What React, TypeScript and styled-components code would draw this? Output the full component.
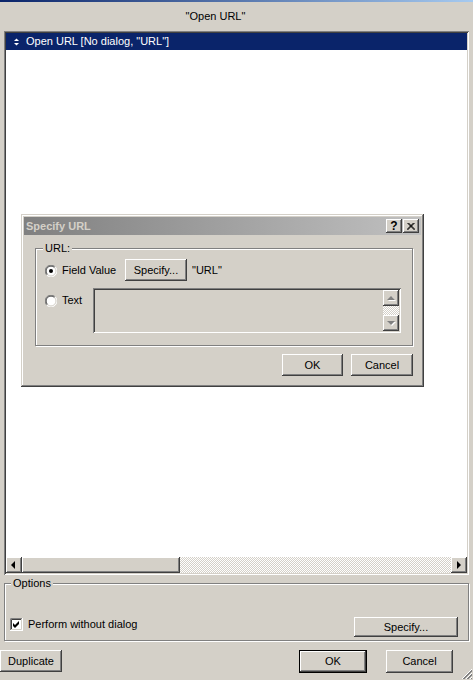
import React from 'react';
import styled, { createGlobalStyle, css } from 'styled-components';

const face = '#d4d0c8';
const shade = '#808080';
const dark = '#404040';
const navy = '#0a246a';

const GlobalStyle = createGlobalStyle`
  *, *::before, *::after { box-sizing: border-box; }
  html, body { margin: 0; padding: 0; background: ${face}; }
  body {
    font-family: 'Liberation Sans', Arial, sans-serif;
    font-size: 11px;
    line-height: 13px;
    color: #000;
  }
`;

const raised = css`
  box-shadow: inset -1px -1px ${dark}, inset 1px 1px #fff, inset -2px -2px ${shade}, inset 2px 2px ${face};
`;

const sunken = css`
  box-shadow: inset 1px 1px ${shade}, inset -1px -1px #fff, inset 2px 2px ${dark}, inset -2px -2px ${face};
`;

const checker = css`
  background: repeating-conic-gradient(#fff 0 25%, ${face} 0 50%) 0 0 / 2px 2px;
`;

const Window = styled.div`
  position: relative;
  width: 473px;
  height: 680px;
  display: flex;
  flex-direction: column;
  background: ${face};
  overflow: hidden;
`;

const TitleEdge = styled.div`
  height: 2px;
  background: linear-gradient(to right, ${navy}, #a6caf0);
`;

const Heading = styled.div`
  height: 29px;
  display: flex;
  align-items: center;
  justify-content: center;
  padding-right: 42px;
`;

const ListBox = styled.div`
  margin: 0 4px;
  height: 544px;
  padding: 2px;
  background: #fff;
  ${sunken};
  display: flex;
  flex-direction: column;
`;

const ListRow = styled.div<{ $selected?: boolean }>`
  height: 17px;
  display: flex;
  align-items: center;
  gap: 7px;
  padding-left: 8px;
  white-space: nowrap;
  background: ${(p) => (p.$selected ? navy : '#fff')};
  color: ${(p) => (p.$selected ? '#fff' : '#000')};
`;

const ListFill = styled.div`
  flex: 1;
`;

const ScrollBar = styled.div<{ $vertical?: boolean }>`
  display: flex;
  flex-direction: ${(p) => (p.$vertical ? 'column' : 'row')};
  ${(p) => (p.$vertical ? 'width: 16px;' : 'height: 16px;')}
`;

const ScrollBtn = styled.div`
  width: 16px;
  height: 16px;
  flex: none;
  display: flex;
  align-items: center;
  justify-content: center;
  background: ${face};
  ${raised};
`;

const Thumb = styled.div<{ $size: number }>`
  width: ${(p) => p.$size}px;
  flex: none;
  background: ${face};
  ${raised};
`;

const Track = styled.div`
  flex: 1;
  ${checker};
`;

const GroupBox = styled.fieldset`
  margin: 0;
  min-width: 0;
  border: 1px solid ${shade};
  box-shadow: inset 1px 1px #fff, 1px 1px #fff;
`;

const Legend = styled.legend<{ $shift: number }>`
  padding: 0 2px;
  margin-left: ${(p) => p.$shift}px;
  line-height: 13px;
  background: ${face};
`;

const OptionsBox = styled(GroupBox)`
  margin: 2px 4px 0;
  padding: 0 10px 3px 5px;
`;

const OptionsRow = styled.div`
  display: flex;
  align-items: flex-start;
  justify-content: space-between;
  margin-top: 27px;
`;

const CheckLabel = styled.label`
  display: flex;
  align-items: center;
  gap: 5px;
  margin-top: 1px;
  white-space: nowrap;
`;

const Button = styled.button<{ $w: number; $h: number; $default?: boolean }>`
  width: ${(p) => p.$w}px;
  height: ${(p) => p.$h}px;
  flex: none;
  padding: 0;
  font: inherit;
  color: #000;
  background: ${face};
  border: ${(p) => (p.$default ? '1px solid #000' : 'none')};
  ${raised};
`;

const BottomBar = styled.div`
  display: flex;
  align-items: flex-start;
  gap: 19px;
  margin-top: 9px;
  padding-right: 20px;
`;

const Spacer = styled.div`
  flex: 1;
`;

const Grip = styled.svg`
  position: absolute;
  right: 0;
  bottom: 0;
`;

const Dialog = styled.div`
  position: absolute;
  left: 21px;
  top: 214px;
  width: 403px;
  height: 173px;
  padding: 3px;
  background: ${face};
  box-shadow: inset -1px -1px ${dark}, inset 1px 1px ${face}, inset -2px -2px ${shade}, inset 2px 2px #fff;
  display: flex;
  flex-direction: column;
`;

const DialogBar = styled.div`
  height: 18px;
  display: flex;
  align-items: center;
  padding: 0 2px;
  background: linear-gradient(to right, ${shade}, #c0c0c0);
`;

const DialogTitle = styled.div`
  flex: 1;
  font-weight: bold;
  color: ${face};
`;

const CaptionBtn = styled.div<{ $gap?: number }>`
  width: 16px;
  height: 14px;
  margin-left: ${(p) => p.$gap ?? 0}px;
  display: flex;
  align-items: center;
  justify-content: center;
  font-weight: bold;
  font-size: 12px;
  background: ${face};
  ${raised};
`;

const UrlBox = styled(GroupBox)`
  margin: 7px 8px 0 11px;
  padding: 4px 11px 12px 9px;
`;

const OptionRow = styled.div<{ $top?: number }>`
  display: flex;
  align-items: flex-start;
  margin-top: ${(p) => p.$top ?? 0}px;
`;

const RadioLabel = styled.label<{ $top: number; $w: number }>`
  display: flex;
  align-items: center;
  gap: 5px;
  flex: none;
  white-space: nowrap;
  width: ${(p) => p.$w}px;
  margin-top: ${(p) => p.$top}px;
`;

const ValueText = styled.span`
  margin: 5px 0 0 5px;
  white-space: nowrap;
`;

const TextBox = styled.div`
  flex: 1;
  height: 45px;
  padding: 2px;
  display: flex;
  justify-content: flex-end;
  background: ${face};
  ${sunken};
`;

const DialogActions = styled.div`
  display: flex;
  justify-content: flex-end;
  gap: 8px;
  margin-top: 8px;
  padding-right: 8px;
`;

const Radio = ({ checked }: { checked?: boolean }) => (
  <svg width="12" height="12" viewBox="0 0 12 12">
    <circle cx="6" cy="6" r="5.5" fill="#fff" />
    <path d="M10.2 1.8 A5.5 5.5 0 0 0 1.8 10.2" fill="none" stroke={shade} />
    <path d="M9.5 2.5 A4.5 4.5 0 0 0 2.5 9.5" fill="none" stroke={dark} />
    <path d="M10.2 1.8 A5.5 5.5 0 0 1 1.8 10.2" fill="none" stroke="#fff" />
    <path d="M9.5 2.5 A4.5 4.5 0 0 1 2.5 9.5" fill="none" stroke={face} />
    {checked && <circle cx="6" cy="6" r="2" fill="#000" />}
  </svg>
);

const Checkbox = () => (
  <svg width="13" height="13" viewBox="0 0 13 13">
    <rect x="0" y="0" width="13" height="13" fill="#fff" />
    <path d="M0.5 12 V0.5 H12" fill="none" stroke={shade} />
    <path d="M1.5 11 V1.5 H11" fill="none" stroke={dark} />
    <path d="M0 12.5 H12.5 V0" fill="none" stroke="#fff" />
    <path d="M1 11.5 H11.5 V1" fill="none" stroke={face} />
    <polygon points="3,5 5,7 9,3 9,6 5,10 3,8" fill="#000" />
  </svg>
);

const Arrow = ({ dir, disabled }: { dir: 'left' | 'right' | 'up' | 'down'; disabled?: boolean }) => {
  const pts = {
    left: '9,4 5,8 9,12',
    right: '6,4 10,8 6,12',
    up: '4,10 8,6 12,10',
    down: '4,6 8,10 12,6',
  }[dir];
  return (
    <svg width="16" height="16" viewBox="0 0 16 16">
      {disabled && <polygon points={pts} fill="#fff" transform="translate(1 1)" />}
      <polygon points={pts} fill={disabled ? shade : '#000'} />
    </svg>
  );
};

const UpDown = () => (
  <svg width="5" height="8" viewBox="0 0 5 8">
    <polygon points="0,3 2.5,0.5 5,3" fill="#fff" />
    <polygon points="0,5 2.5,7.5 5,5" fill="#fff" />
  </svg>
);

const CloseGlyph = () => (
  <svg width="8" height="7" viewBox="0 0 8 7">
    <path d="M0.5 0 L7.5 7 M7.5 0 L0.5 7 M1.5 0 L8 6.5 M6.5 0 L0 6.5" stroke="#000" strokeWidth="1" />
  </svg>
);

const App: React.FC = () => {
  return (
    <Window>
      <GlobalStyle />
      <TitleEdge />
      <Heading>"Open URL"</Heading>

      <ListBox>
        <ListRow $selected>
          <UpDown />
          Open URL [No dialog, "URL"]
        </ListRow>
        <ListFill />
        <ScrollBar>
          <ScrollBtn>
            <Arrow dir='left' />
          </ScrollBtn>
          <Thumb $size={158} />
          <Track />
          <ScrollBtn>
            <Arrow dir='right' />
          </ScrollBtn>
        </ScrollBar>
      </ListBox>

      <OptionsBox>
        <Legend $shift={1}>Options</Legend>
        <OptionsRow>
          <CheckLabel>
            <Checkbox />
            Perform without dialog
          </CheckLabel>
          <Button $w={104} $h={20}>
            Specify...
          </Button>
        </OptionsRow>
      </OptionsBox>

      <BottomBar>
        <Button $w={62} $h={22}>
          Duplicate
        </Button>
        <Spacer />
        <Button $w={68} $h={23} $default>
          OK
        </Button>
        <Button $w={67} $h={23}>
          Cancel
        </Button>
      </BottomBar>

      <Grip width="12" height="12" viewBox="0 0 12 12">
        <path d="M11 1 L1 11 M11 5 L5 11 M11 9 L9 11" stroke="#fff" />
        <path d="M11 2 L2 11 M11 6 L6 11 M11 10 L10 11" stroke={shade} />
        <path d="M11 3 L3 11 M11 7 L7 11" stroke={shade} />
      </Grip>

      <Dialog>
        <DialogBar>
          <DialogTitle>Specify URL</DialogTitle>
          <CaptionBtn>?</CaptionBtn>
          <CaptionBtn $gap={1}>
            <CloseGlyph />
          </CaptionBtn>
        </DialogBar>

        <UrlBox>
          <Legend $shift={-2}>URL:</Legend>
          <OptionRow>
            <RadioLabel $top={5} $w={80}>
              <Radio checked />
              Field Value
            </RadioLabel>
            <Button $w={62} $h={22}>
              Specify...
            </Button>
            <ValueText>"URL"</ValueText>
          </OptionRow>
          <OptionRow $top={7}>
            <RadioLabel $top={6} $w={48}>
              <Radio />
              Text
            </RadioLabel>
            <TextBox>
              <ScrollBar $vertical>
                <ScrollBtn>
                  <Arrow dir='up' disabled />
                </ScrollBtn>
                <Track />
                <ScrollBtn>
                  <Arrow dir='down' disabled />
                </ScrollBtn>
              </ScrollBar>
            </TextBox>
          </OptionRow>
        </UrlBox>

        <DialogActions>
          <Button $w={61} $h={22}>
            OK
          </Button>
          <Button $w={62} $h={22}>
            Cancel
          </Button>
        </DialogActions>
      </Dialog>
    </Window>
  );
};

export default App;
